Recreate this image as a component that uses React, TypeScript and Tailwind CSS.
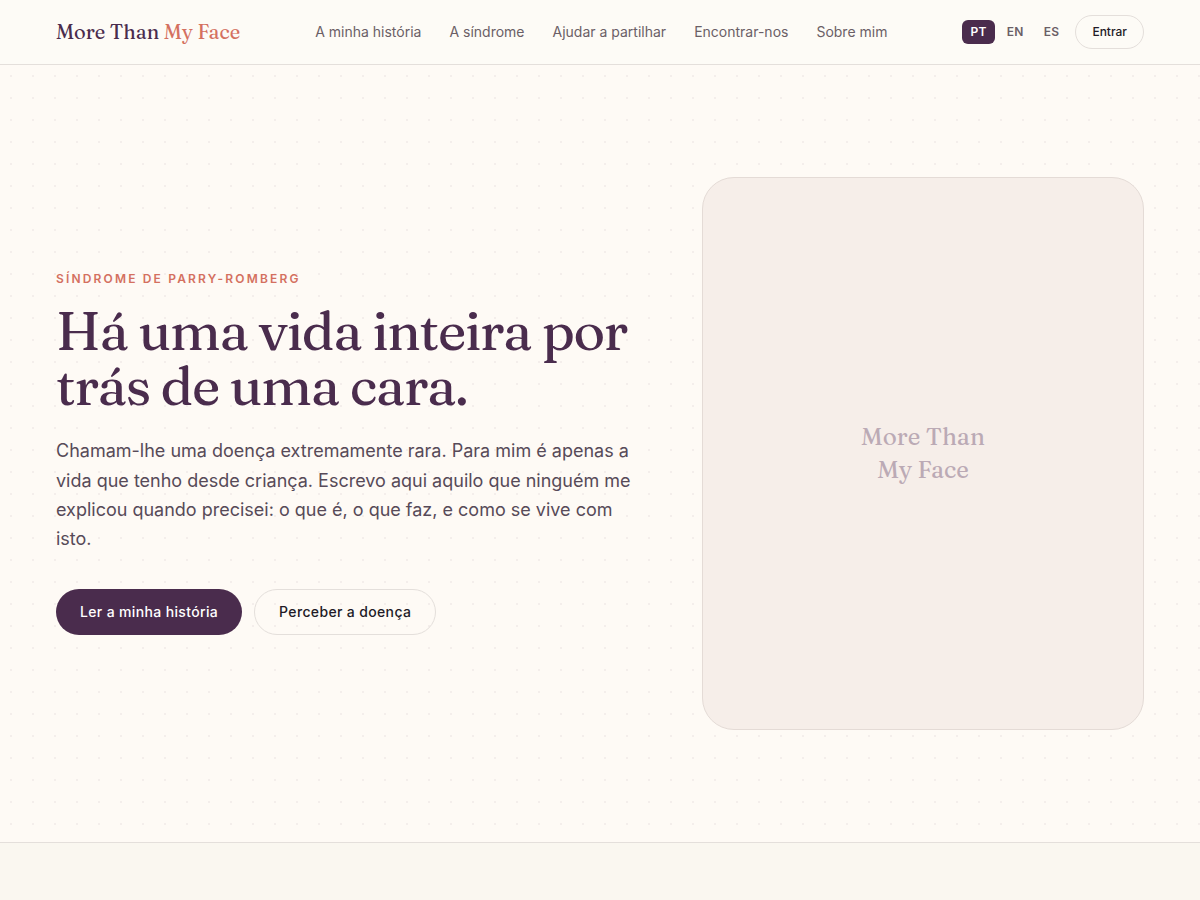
import { useState } from "react";

const links = [
  { href: "#historia", label: "A minha história" },
  { href: "#sindrome", label: "A síndrome" },
  { href: "#partilhar", label: "Ajudar a partilhar" },
  { href: "#encontrar", label: "Encontrar-nos" },
  { href: "#sobre", label: "Sobre mim" },
];

const languages = ["PT", "EN", "ES"];

function Header() {
  const [lang, setLang] = useState("PT");

  return (
    <header className="border-b border-[#e4dfdb] bg-[#fdfbf6]">
      <div className="mx-auto flex h-16 max-w-[1200px] items-center justify-between px-14">
        <a
          href="#"
          className="font-[Fraunces,'Liberation_Serif',serif] text-xl text-[#4a2c4d] whitespace-nowrap"
        >
          More Than <span className="text-[#d4705f]">My Face</span>
        </a>

        <nav className="flex gap-7 text-sm text-[#6b5f66]">
          {links.map((link) => (
            <a key={link.href} href={link.href} className="whitespace-nowrap hover:text-[#4a2c4d]">
              {link.label}
            </a>
          ))}
        </nav>

        <div className="flex items-center gap-2">
          <div className="flex gap-1">
            {languages.map((code) => (
              <button
                key={code}
                type="button"
                aria-pressed={lang === code}
                onClick={() => setLang(code)}
                className={
                  lang === code
                    ? "rounded-md bg-[#4a2c4d] px-2 py-1 text-xs font-semibold tracking-wide text-white"
                    : "rounded-md px-2 py-1 text-xs font-semibold tracking-wide text-[#6b5f66]"
                }
              >
                {code}
              </button>
            ))}
          </div>
          <a
            href="#entrar"
            className="rounded-full border border-[#e4dfdb] px-4 py-2 text-xs font-medium text-[#221a26]"
          >
            Entrar
          </a>
        </div>
      </div>
    </header>
  );
}

function Hero() {
  return (
    <section className="bg-[radial-gradient(#f4eeeb_1px,transparent_1.5px)] bg-[length:22px_22px]">
      <div className="mx-auto grid max-w-[1200px] grid-cols-[1.15fr_0.85fr] items-center gap-12 px-14 py-28">
        <div>
          <p className="text-xs font-semibold uppercase tracking-[0.18em] text-[#d4705f]">
            Síndrome de Parry-Romberg
          </p>
          <h1 className="mt-4 font-[Fraunces,'Liberation_Serif',serif] text-[54px] leading-[55px] font-medium tracking-tight text-[#4a2c4d]">
            Há uma vida inteira por trás de uma cara.
          </h1>
          <p className="mt-[23px] max-w-[576px] text-lg leading-relaxed text-[#574a58]">
            Chamam-lhe uma doença extremamente rara. Para mim é apenas a vida que tenho desde
            criança. Escrevo aqui aquilo que ninguém me explicou quando precisei: o que é, o que
            faz, e como se vive com isto.
          </p>
          <div className="mt-9 flex flex-wrap gap-3 text-sm font-medium tracking-wide">
            <a
              href="#historia"
              className="flex items-center rounded-full bg-[#4a2c4d] px-6 text-white"
            >
              Ler a minha história
            </a>
            <a
              href="#sindrome"
              className="rounded-full border border-[#e4dfdb] px-6 py-3 text-[#221a26]"
            >
              Perceber a doença
            </a>
          </div>
        </div>

        <div className="flex aspect-[4/5] items-center justify-center rounded-[32px] border border-[#e4dbd6] bg-[#f6eee9]">
          <p className="text-center font-[Fraunces,'Liberation_Serif',serif] text-2xl leading-snug text-[#bbaab5]">
            More Than
            <br />
            My Face
          </p>
        </div>
      </div>
    </section>
  );
}

export default function App() {
  return (
    <div className="flex min-h-screen flex-col bg-[#fefaf5] font-[Inter,sans-serif]">
      <Header />
      <main className="flex flex-1 flex-col">
        <Hero />
        <section className="flex-1 border-t border-[#e4dfdb] bg-[#faf7f0]" />
      </main>
    </div>
  );
}
